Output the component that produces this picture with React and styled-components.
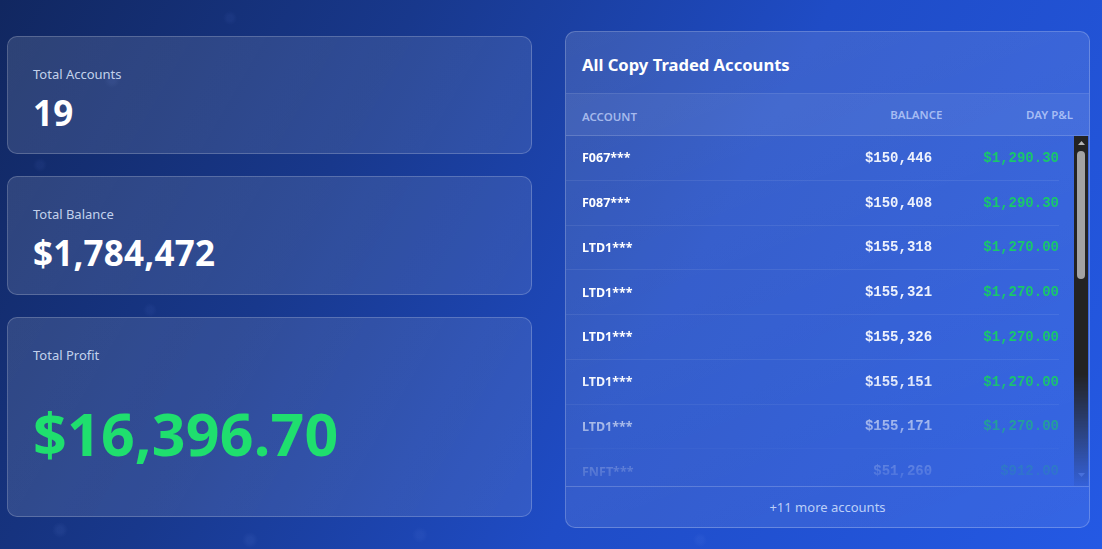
import React from "react";
import styled, { createGlobalStyle } from "styled-components";

const GlobalStyle = createGlobalStyle`
  html, body {
    margin: 0;
    padding: 0;
    width: 1102px;
    height: 549px;
    overflow: hidden;
    font-family: "Noto Sans", "Open Sans", sans-serif;
  }
  #root { width: 1102px; height: 549px; }
`;

const Page = styled.div`
  box-sizing: border-box;
  width: 1102px;
  height: 549px;
  padding: 31px 12px 0 7px;
  display: grid;
  grid-template-columns: 525px 525px;
  column-gap: 33px;
  align-items: start;
  background:
    radial-gradient(circle at 112px 80px, rgba(120,150,255,0.07) 0 3px, transparent 8px),
    radial-gradient(circle at 230px 18px, rgba(120,150,255,0.06) 0 3px, transparent 7px),
    radial-gradient(circle at 40px 165px, rgba(120,150,255,0.06) 0 3px, transparent 7px),
    radial-gradient(circle at 150px 310px, rgba(120,150,255,0.06) 0 3px, transparent 7px),
    radial-gradient(circle at 60px 530px, rgba(140,170,255,0.07) 0 3px, transparent 8px),
    radial-gradient(circle at 250px 540px, rgba(140,170,255,0.07) 0 3px, transparent 8px),
    radial-gradient(circle at 420px 535px, rgba(140,170,255,0.06) 0 3px, transparent 8px),
    radial-gradient(circle at 700px 540px, rgba(140,170,255,0.06) 0 3px, transparent 7px),
    linear-gradient(118deg, #112760 0%, #18388c 30%, #1f4cc6 60%, #2459e4 100%);
`;

const LeftColumn = styled.div`
  display: flex;
  flex-direction: column;
  gap: 22px;
  margin-top: 5px;
`;

const StatCard = styled.div`
  box-sizing: border-box;
  height: ${(p) => p.$height}px;
  padding: 28px 25px 0;
  border-radius: 10px;
  border: 1px solid rgba(255, 255, 255, 0.2);
  background: linear-gradient(120deg, rgba(255,255,255,0.12), rgba(255,255,255,0.09));
  display: flex;
  flex-direction: column;
`;

const StatLabel = styled.div`
  font-size: 13px;
  line-height: 18px;
  color: rgba(215, 226, 250, 0.9);
`;

const StatValue = styled.div`
  margin-top: ${(p) => (p.$big ? 34 : 9)}px;
  font-size: ${(p) => (p.$big ? 59 : 35)}px;
  line-height: 1.2;
  font-weight: 700;
  color: ${(p) => (p.$green ? "#1fdf6e" : "#ffffff")};
  letter-spacing: 0.2px;
`;

const Panel = styled.div`
  box-sizing: border-box;
  height: 497px;
  border-radius: 10px;
  border: 1px solid rgba(255, 255, 255, 0.22);
  background: linear-gradient(160deg, rgba(255,255,255,0.13), rgba(255,255,255,0.08));
  display: flex;
  flex-direction: column;
  overflow: hidden;
`;

const PanelTitle = styled.div`
  padding: 22px 16px 17px;
  font-size: 16.6px;
  line-height: 22px;
  font-weight: 700;
  color: #ffffff;
  border-bottom: 1px solid rgba(255, 255, 255, 0.14);
`;

const cols = "46% 27.4% 26.6%";

const HeadRow = styled.div`
  box-sizing: border-box;
  height: 42px;
  padding: 0 16px;
  display: grid;
  grid-template-columns: ${cols};
  align-items: center;
  background: rgba(255, 255, 255, 0.06);
  border-bottom: 1px solid rgba(255, 255, 255, 0.16);
`;

const HeadCell = styled.div`
  font-size: 11.5px;
  font-weight: 600;
  color: rgba(205, 220, 255, 0.72);
  text-transform: uppercase;
  text-align: ${(p) => (p.$right ? "right" : "left")};
  margin-top: ${(p) => (p.$right ? 0 : 4)}px;
`;

const ScrollArea = styled.div`
  height: 350px;
  display: flex;
  overflow: hidden;
  -webkit-mask-image: linear-gradient(to bottom, #000 0%, #000 68%, rgba(0,0,0,0.05) 100%);
  mask-image: linear-gradient(to bottom, #000 0%, #000 68%, rgba(0,0,0,0.05) 100%);
`;

const List = styled.div`
  flex: 1;
  min-width: 0;
  padding-right: 15px;
  overflow: hidden;
`;

const ScrollTrack = styled.div`
  width: 14px;
  margin-right: 1px;
  background: #232323;
  display: flex;
  flex-direction: column;
  align-items: center;
`;

const ScrollArrow = styled.div`
  height: 14px;
  width: 14px;
  display: flex;
  align-items: center;
  justify-content: center;
  margin-top: ${(p) => (p.$down ? "auto" : "0")};
  margin-bottom: ${(p) => (p.$down ? "4px" : "0")};
`;

const ScrollThumb = styled.div`
  width: 8px;
  height: 128px;
  margin-top: 1px;
  border-radius: 4px;
  background: #a3a3a3;
`;

const Row = styled.div`
  box-sizing: border-box;
  height: 44.75px;
  padding: 0 0 0 16px;
  display: grid;
  grid-template-columns: ${cols};
  align-items: center;
  border-bottom: 1px solid rgba(255, 255, 255, 0.08);
`;

const AccountCell = styled.div`
  font-size: 12.5px;
  font-weight: 700;
  color: #ffffff;
`;

const MoneyCell = styled.div`
  font-family: "Liberation Mono", "DejaVu Sans Mono", monospace;
  font-size: 14px;
  font-weight: 700;
  text-align: right;
  color: ${(p) => (p.$green ? "#19c86b" : "#eef2fc")};
`;

const Footer = styled.div`
  flex: 1;
  display: flex;
  align-items: center;
  justify-content: center;
  border-top: 1px solid rgba(255, 255, 255, 0.2);
  font-size: 13px;
  color: rgba(215, 228, 255, 0.85);
`;

const accounts = [
  ["F067***", "$150,446", "$1,290.30"],
  ["F087***", "$150,408", "$1,290.30"],
  ["LTD1***", "$155,318", "$1,270.00"],
  ["LTD1***", "$155,321", "$1,270.00"],
  ["LTD1***", "$155,326", "$1,270.00"],
  ["LTD1***", "$155,151", "$1,270.00"],
  ["LTD1***", "$155,171", "$1,270.00"],
  ["FNFT***", "$51,260", "$912.00"],
];

const Triangle = ({ down }) => (
  <svg width="7" height="4" viewBox="0 0 7 4">
    <path d={down ? "M0 0 L7 0 L3.5 4 Z" : "M0 4 L7 4 L3.5 0 Z"} fill="#b5b5b5" />
  </svg>
);

export default function App() {
  return (
    <>
      <GlobalStyle />
      <Page>
        <LeftColumn>
          <StatCard $height={118}>
            <StatLabel>Total Accounts</StatLabel>
            <StatValue>19</StatValue>
          </StatCard>
          <StatCard $height={119}>
            <StatLabel>Total Balance</StatLabel>
            <StatValue>$1,784,472</StatValue>
          </StatCard>
          <StatCard $height={200}>
            <StatLabel>Total Profit</StatLabel>
            <StatValue $big $green>$16,396.70</StatValue>
          </StatCard>
        </LeftColumn>
        <Panel>
          <PanelTitle>All Copy Traded Accounts</PanelTitle>
          <HeadRow>
            <HeadCell>Account</HeadCell>
            <HeadCell $right>Balance</HeadCell>
            <HeadCell $right>Day P&amp;L</HeadCell>
          </HeadRow>
          <ScrollArea>
            <List>
              {accounts.map(([name, bal, pnl], i) => (
                <Row key={i}>
                  <AccountCell>{name}</AccountCell>
                  <MoneyCell>{bal}</MoneyCell>
                  <MoneyCell $green>{pnl}</MoneyCell>
                </Row>
              ))}
            </List>
            <ScrollTrack>
              <ScrollArrow><Triangle /></ScrollArrow>
              <ScrollThumb />
              <ScrollArrow $down><Triangle down /></ScrollArrow>
            </ScrollTrack>
          </ScrollArea>
          <Footer>+11 more accounts</Footer>
        </Panel>
      </Page>
    </>
  );
}
